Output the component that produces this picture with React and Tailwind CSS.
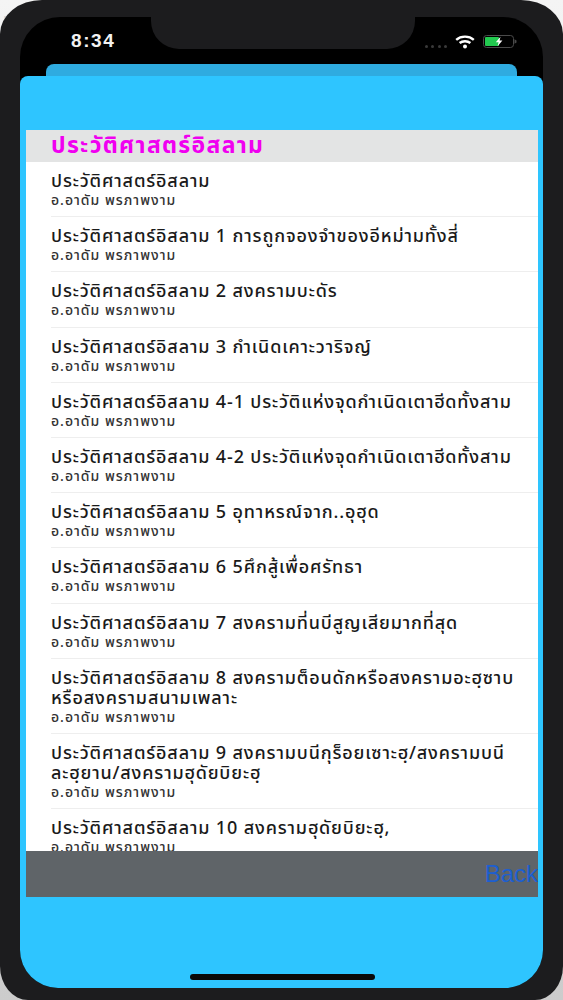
const TITLE = "ประวัติศาสตร์อิสลาม";
const AUTHOR = "อ.อาดัม พรภาพงาม";

const lectures = [
  { title: ["ประวัติศาสตร์อิสลาม"] },
  { title: ["ประวัติศาสตร์อิสลาม 1 การถูกจองจำของอีหม่ามทั้งสี่"] },
  { title: ["ประวัติศาสตร์อิสลาม 2 สงครามบะดัร"] },
  { title: ["ประวัติศาสตร์อิสลาม 3 กำเนิดเคาะวาริจญ์"] },
  { title: ["ประวัติศาสตร์อิสลาม 4-1 ประวัติแห่งจุดกำเนิดเตาฮีดทั้งสาม"] },
  { title: ["ประวัติศาสตร์อิสลาม 4-2 ประวัติแห่งจุดกำเนิดเตาฮีดทั้งสาม"] },
  { title: ["ประวัติศาสตร์อิสลาม 5 อุทาหรณ์จาก..อุฮุด"] },
  { title: ["ประวัติศาสตร์อิสลาม 6 5ศึกสู้เพื่อศรัทธา"] },
  { title: ["ประวัติศาสตร์อิสลาม 7 สงครามที่นบีสูญเสียมากที่สุด"] },
  { title: ["ประวัติศาสตร์อิสลาม 8 สงครามต็อนดักหรือสงครามอะฮฺซาบ", "หรือสงครามสนามเพลาะ"] },
  { title: ["ประวัติศาสตร์อิสลาม 9 สงครามบนีกุร็อยเซาะฮฺ/สงครามบนี", "ละฮฺยาน/สงครามฮุดัยบิยะฮฺ"] },
  { title: ["ประวัติศาสตร์อิสลาม 10 สงครามฮุดัยบิยะฮฺ,"] },
];

function WifiIcon() {
  return (
    <svg width="20" height="14" viewBox="0 0 20 14" fill="none" stroke="#fff" strokeWidth="2.4">
      <path d="M1.2 4.8C6 .6 14 .6 18.8 4.8" />
      <path d="M4.6 8C7.6 5.6 12.4 5.6 15.4 8" />
      <circle cx="10" cy="11.6" r="2" fill="#fff" stroke="none" />
    </svg>
  );
}

function BatteryIcon() {
  return (
    <svg width="34" height="13" viewBox="0 0 34 13" fill="none">
      <rect x="0.5" y="0.5" width="30" height="12" rx="3" stroke="#4a4a4a" />
      <rect x="2" y="2" width="14" height="9" rx="1" fill="#22c94f" />
      <path d="M31.5 4.2L33.5 5.6V7.4L31.5 8.8Z" fill="#4a4a4a" />
      <path d="M17.5 1.8L12.8 7.2H15.6L14.6 11.2L19.4 5.6H16.6Z" fill="#fff" />
    </svg>
  );
}

function StatusBar() {
  return (
    <div className="relative flex items-center justify-between h-[47px] pl-[51px] pr-[26px] pt-[2px] font-['Liberation_Sans']">
      <span className="text-[#f2f2f2] text-[19px] font-bold tracking-[1.6px]">8:34</span>
      {/* notch */}
      <div className="absolute left-[131px] top-0 w-[264px] h-[32px] bg-[#1c1c1e] rounded-b-[28px]" />
      <div className="flex items-center">
        <div className="flex gap-[3.5px] mr-[8px] mt-[9px]">
          <span className="w-[3px] h-[3px] rounded-full bg-[#3a3a3a]" />
          <span className="w-[3px] h-[3px] rounded-full bg-[#3a3a3a]" />
          <span className="w-[3px] h-[3px] rounded-full bg-[#3a3a3a]" />
          <span className="w-[3px] h-[3px] rounded-full bg-[#3a3a3a]" />
        </div>
        <WifiIcon />
        <div className="w-[8px]" />
        <BatteryIcon />
      </div>
    </div>
  );
}

function LectureRow({ lecture }) {
  return (
    <div className="pl-[25px]">
      <div className="border-b border-[#eeeeee] pt-[10px] pb-[6.2px]">
        {lecture.title.map((line) => (
          <div key={line} className="text-[18px] leading-[20px] tracking-[0.85px] text-[#1a1a1a] font-medium whitespace-nowrap">
            {line}
          </div>
        ))}
        <div className="text-[14px] leading-[18px] tracking-[1px] text-[#333333] font-medium whitespace-nowrap">{AUTHOR}</div>
      </div>
    </div>
  );
}

export default function App() {
  return (
    <div
      className="relative w-[563px] h-[1000px] bg-linear-to-b from-[#f4f4f4] to-[#cccccc] overflow-hidden"
      style={{ fontFamily: '"Noto Sans Thai", "Noto Sans", "Liberation Sans", "DejaVu Sans", sans-serif' }}
    >
      {/* faint letter of the page behind the phone */}
      <span className="absolute left-[3px] top-[12px] text-[13px] text-[#d4d4d4]">P</span>
      <div className="relative w-full h-full bg-[#1c1c1e] rounded-t-[42px_34px] rounded-b-[28px_34px] px-[20px] pt-[17px] pb-[12px]">
        <div className="h-full bg-black rounded-t-[40px] rounded-b-[38px] flex flex-col">
          <StatusBar />
          {/* sheet behind */}
          <div className="mx-[26px] h-[12px] bg-[#2fabe0] rounded-t-[8px] shrink-0" />
          {/* front sheet */}
          <div className="relative flex-1 min-h-0 bg-[#2ec5ff] rounded-t-[8px] rounded-b-[38px] flex flex-col pl-[6px] pr-[5px] pt-[54px] pb-[91px]">
            <div className="flex-1 min-h-0 flex flex-col">
              <div className="h-[32px] shrink-0 bg-[#e3e4e4] pl-[25px] flex items-center text-[23px] font-bold tracking-[1.3px] text-[#f000f0] whitespace-nowrap">
                {TITLE}
              </div>
              <div className="flex-1 min-h-0 bg-white overflow-hidden">
                {lectures.map((lecture) => (
                  <LectureRow key={lecture.title[0]} lecture={lecture} />
                ))}
              </div>
              <div className="h-[46px] shrink-0 bg-[#5f6468] flex items-center justify-end">
                <span className="text-[24px] text-[#1d5fd0] font-['Liberation_Sans']">Back</span>
              </div>
            </div>
            {/* home indicator */}
            <div className="absolute left-[170px] bottom-[8px] w-[185px] h-[6px] rounded-full bg-[#0a0a0a]" />
          </div>
        </div>
      </div>
    </div>
  );
}
